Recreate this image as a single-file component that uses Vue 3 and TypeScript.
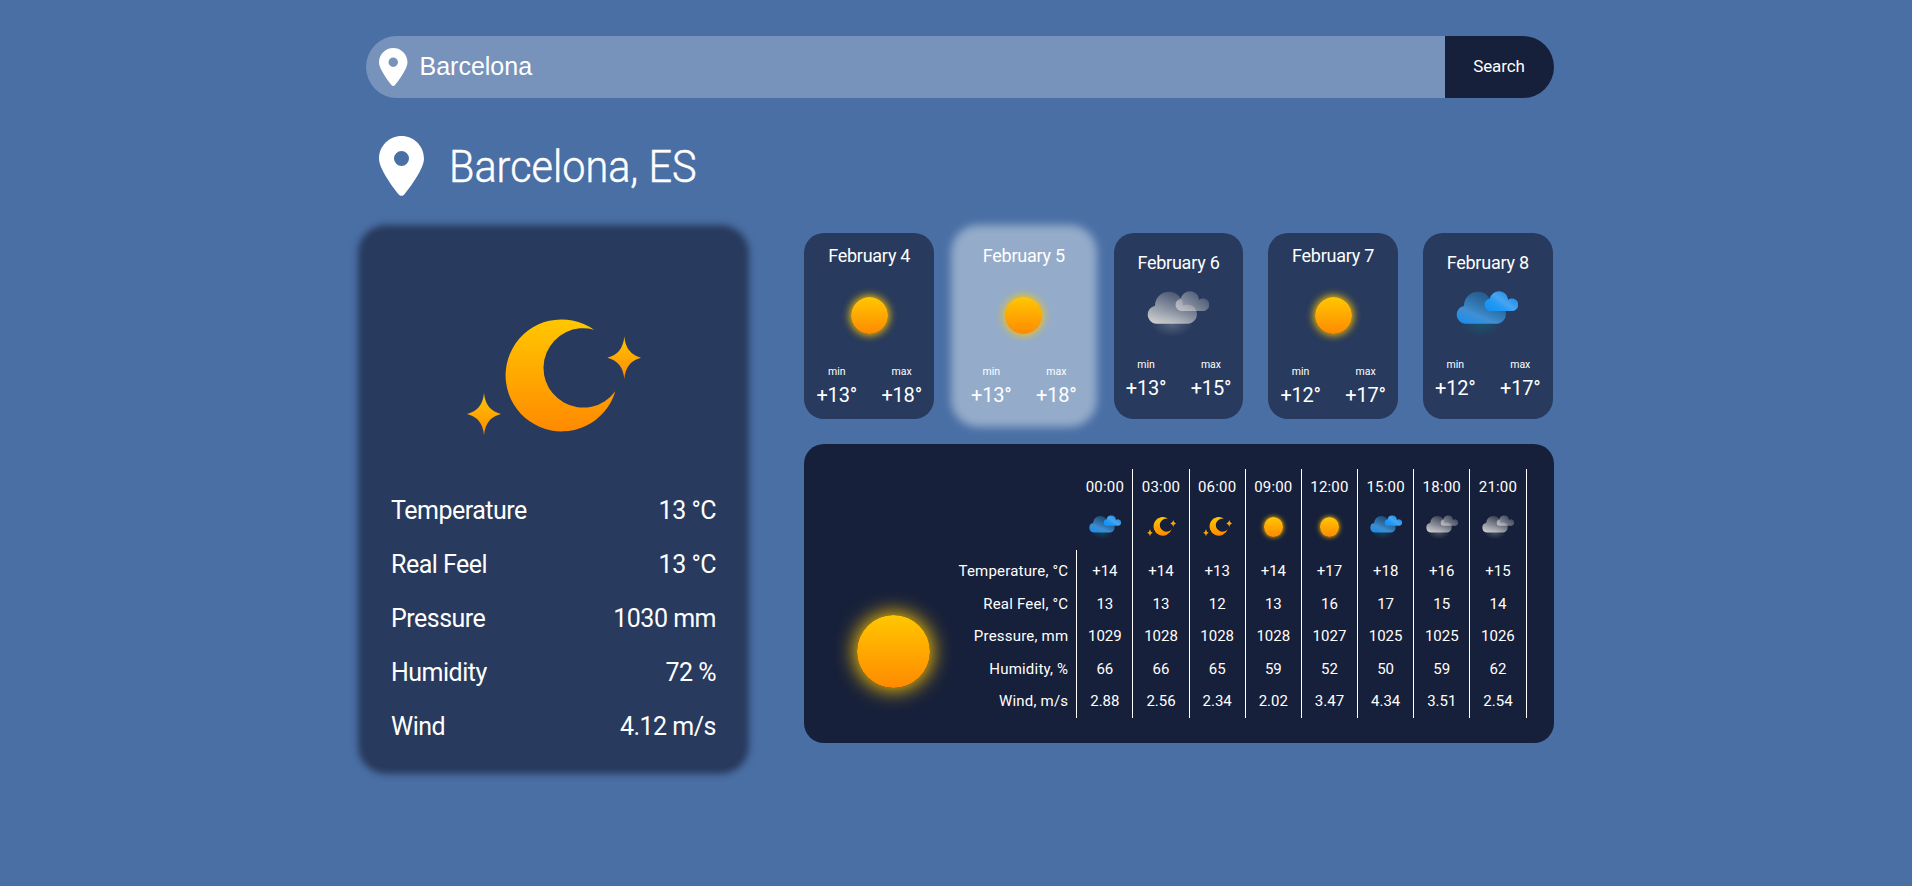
<script setup lang="ts">
import { ref } from 'vue'

type Icon = 'sun' | 'moon' | 'rain' | 'cloud'

interface Day {
  date: string
  icon: Icon
  min: string
  max: string
}

interface Hour {
  time: string
  icon: Icon
  values: string[]
}

const query = ref('Barcelona')
const activeDay = ref(1)

const current = [
  { label: 'Temperature', value: '13 °C' },
  { label: 'Real Feel', value: '13 °C' },
  { label: 'Pressure', value: '1030 mm' },
  { label: 'Humidity', value: '72 %' },
  { label: 'Wind', value: '4.12 m/s' },
]

const days: Day[] = [
  { date: 'February 4', icon: 'sun', min: '+13°', max: '+18°' },
  { date: 'February 5', icon: 'sun', min: '+13°', max: '+18°' },
  { date: 'February 6', icon: 'cloud', min: '+13°', max: '+15°' },
  { date: 'February 7', icon: 'sun', min: '+12°', max: '+17°' },
  { date: 'February 8', icon: 'rain', min: '+12°', max: '+17°' },
]

const labels = ['Temperature, °C', 'Real Feel, °C', 'Pressure, mm', 'Humidity, %', 'Wind, m/s']

const hours: Hour[] = [
  { time: '00:00', icon: 'rain', values: ['+14', '13', '1029', '66', '2.88'] },
  { time: '03:00', icon: 'moon', values: ['+14', '13', '1028', '66', '2.56'] },
  { time: '06:00', icon: 'moon', values: ['+13', '12', '1028', '65', '2.34'] },
  { time: '09:00', icon: 'sun', values: ['+14', '13', '1028', '59', '2.02'] },
  { time: '12:00', icon: 'sun', values: ['+17', '16', '1027', '52', '3.47'] },
  { time: '15:00', icon: 'rain', values: ['+18', '17', '1025', '50', '4.34'] },
  { time: '18:00', icon: 'cloud', values: ['+16', '15', '1025', '59', '3.51'] },
  { time: '21:00', icon: 'cloud', values: ['+15', '14', '1026', '62', '2.54'] },
]

const pin =
  'M215.7 499.2C267 435 384 279.4 384 192C384 86 298 0 192 0S0 86 0 192c0 87.4 117 243 168.3 307.2c12.3 15.3 35.1 15.3 47.4 0zM192 128a64 64 0 1 1 0 128 64 64 0 1 1 0-128z'
const bigCloud =
  'M9.1 33.7A9.1 9.1 0 0 1 8 15.7A14 14 0 0 1 36 15.8A9.5 9.5 0 1 1 40.5 33.7Z'
const smallCloud =
  'M34.2 21A6.2 6.2 0 0 1 33.8 8.7A9.3 9.3 0 0 1 52.2 9.7A6.3 6.3 0 1 1 55.7 21Z'
</script>

<template>
  <svg class="defs" width="0" height="0" aria-hidden="true">
    <defs>
      <linearGradient id="gold" x1="0" y1="0" x2="0" y2="1">
        <stop offset="0" stop-color="#ffc700" />
        <stop offset="1" stop-color="#ff8a00" />
      </linearGradient>
      <linearGradient id="gray-big" gradientUnits="userSpaceOnUse" x1="12" y1="38" x2="27" y2="0">
        <stop offset="0" stop-color="#d6d6d6" />
        <stop offset="1" stop-color="#d6d6d6" stop-opacity="0.15" />
      </linearGradient>
      <linearGradient id="gray-small" gradientUnits="userSpaceOnUse" x1="32" y1="22" x2="48" y2="1">
        <stop offset="0" stop-color="#d6d6d6" stop-opacity="0.75" />
        <stop offset="1" stop-color="#d6d6d6" stop-opacity="0.24" />
      </linearGradient>
      <linearGradient id="blue-big" gradientUnits="userSpaceOnUse" x1="10" y1="36" x2="25" y2="2">
        <stop offset="0" stop-color="#168cf0" />
        <stop offset="0.38" stop-color="#4298e0" stop-opacity="0.9" />
        <stop offset="1" stop-color="#2480bc" stop-opacity="0.48" />
      </linearGradient>
      <linearGradient id="blue-small" gradientUnits="userSpaceOnUse" x1="33" y1="18" x2="46" y2="0">
        <stop offset="0" stop-color="#1693f5" />
        <stop offset="0.35" stop-color="#239bf6" />
        <stop offset="0.62" stop-color="#4aa4f0" />
        <stop offset="1" stop-color="#2592ea" />
      </linearGradient>
      <linearGradient id="gray-glow" x1="0" y1="0" x2="0" y2="1">
        <stop offset="0" stop-color="#d6d6d6" />
        <stop offset="1" stop-color="#d6d6d6" />
      </linearGradient>
      <radialGradient id="gray-halo">
        <stop offset="0" stop-color="#d6d6d6" stop-opacity="0.27" />
        <stop offset="0.5" stop-color="#d6d6d6" stop-opacity="0.12" />
        <stop offset="1" stop-color="#d6d6d6" stop-opacity="0" />
      </radialGradient>
      <radialGradient id="blue-halo">
        <stop offset="0" stop-color="#007c8c" stop-opacity="0.38" />
        <stop offset="0.5" stop-color="#007c8c" stop-opacity="0.18" />
        <stop offset="1" stop-color="#007c8c" stop-opacity="0" />
      </radialGradient>
      <symbol id="moon" viewBox="0 -1 175 118">
        <path
          fill="url(#gold)"
          d="M128 9.7A56 56 0 1 0 149.3 71.3A39.7 39.7 0 1 1 128 9.7Z"
        />
        <path fill="url(#gold)" d="M158.3 16.5Q159.8 34 175.3 37.7Q159.8 41.4 158.3 59Q156.8 41.4 141.3 37.7Q156.8 34 158.3 16.5Z" />
        <path fill="url(#gold)" d="M18 73Q19.5 90.3 35 94Q19.5 97.7 18 115.3Q16.5 97.7 1 94Q16.5 90.3 18 73Z" />
      </symbol>
      <symbol id="cloud" viewBox="0 0 62 48">
        <ellipse cx="25" cy="34" rx="21" ry="13" fill="url(#gray-halo)" />
        <path :d="bigCloud" fill="url(#gray-big)" />
        <path :d="smallCloud" fill="url(#gray-small)" />
      </symbol>
      <symbol id="rain" viewBox="0 0 62 48">
        <ellipse cx="25" cy="34" rx="21" ry="13" fill="url(#blue-halo)" />
        <path :d="bigCloud" fill="url(#blue-big)" />
        <path :d="smallCloud" fill="url(#blue-small)" />
      </symbol>
    </defs>
  </svg>

  <main class="page">
    <form class="search" @submit.prevent>
      <label class="field">
        <svg class="pin-small" viewBox="0 0 384 512"><path :d="pin" /></svg>
        <input v-model="query" class="input" type="text" />
      </label>
      <button class="submit" type="submit">Search</button>
    </form>

    <header class="place">
      <svg class="pin-large" viewBox="0 0 384 512"><path :d="pin" /></svg>
      <h1 class="city">Barcelona, ES</h1>
    </header>

    <div class="content">
      <section class="today">
        <svg class="today-icon"><use href="#moon" /></svg>
        <dl class="stats">
          <div v-for="row in current" :key="row.label" class="stat">
            <dt>{{ row.label }}</dt>
            <dd>{{ row.value }}</dd>
          </div>
        </dl>
      </section>

      <div class="forecast">
        <ul class="days">
          <li
            v-for="(day, i) in days"
            :key="day.date"
            class="day"
            :class="{ active: i === activeDay }"
            @click="activeDay = i"
          >
            <span class="date">{{ day.date }}</span>
            <span v-if="day.icon === 'sun'" class="slot-sun"><i class="sun sun-day"></i></span>
            <span v-else class="slot-cloud">
              <svg class="cloud-day"><use :href="'#' + day.icon" /></svg>
            </span>
            <span class="range">
              <span class="bound"><small>min</small>{{ day.min }}</span>
              <span class="bound"><small>max</small>{{ day.max }}</span>
            </span>
          </li>
        </ul>

        <section class="hourly">
          <div class="summary"><i class="sun sun-large"></i></div>
          <div class="labels">
            <span v-for="label in labels" :key="label" class="cell">{{ label }}</span>
          </div>
          <div v-for="hour in hours" :key="hour.time" class="hour">
            <span class="time">{{ hour.time }}</span>
            <span class="hour-icon">
              <i v-if="hour.icon === 'sun'" class="sun sun-hour"></i>
              <svg v-else-if="hour.icon === 'moon'" class="moon-hour"><use href="#moon" /></svg>
              <svg v-else class="cloud-hour"><use :href="'#' + hour.icon" /></svg>
            </span>
            <span v-for="(value, v) in hour.values" :key="v" class="cell">{{ value }}</span>
          </div>
        </section>
      </div>
    </div>
  </main>
</template>

<style>
body {
  background: #4a6fa5;
}
</style>

<style scoped>
.defs {
  position: absolute;
}

.page {
  box-sizing: border-box;
  width: 100%;
  min-height: 886px;
  padding: 36px 358px 0 366px;
  color: #fff;
  font-family: Roboto, 'Liberation Sans', sans-serif;
}

.search {
  display: flex;
  height: 62px;
  border-radius: 31px;
  overflow: hidden;
}

.field {
  flex: 1;
  display: flex;
  align-items: center;
  background: rgba(255, 255, 255, 0.25);
}

.pin-small,
.pin-large {
  flex: none;
  fill: #fff;
}

.pin-small {
  width: 28.5px;
  height: 38px;
  margin-left: 13px;
}

.input {
  flex: 1;
  margin: 0;
  padding: 0 0 1px 12px;
  border: 0;
  outline: 0;
  background: none;
  color: #fff;
  font: 25px 'Liberation Sans', Arial, sans-serif;
}

.submit {
  width: 109px;
  padding: 0 1px 2px 0;
  border: 0;
  background: #17203a;
  color: #fff;
  font: 17px Roboto, sans-serif;
  letter-spacing: -0.1px;
}

.place {
  display: flex;
  align-items: center;
  height: 60px;
  margin-top: 38px;
  padding-left: 13px;
}

.pin-large {
  width: 45px;
  height: 60px;
}

.city {
  margin: 0 0 0 25px;
  font-size: 45px;
  font-weight: 300;
  line-height: 61px;
  transform: scaleX(0.92);
  transform-origin: left;
  -webkit-text-stroke: 0.5px #fff;
}

.content {
  display: flex;
  justify-content: space-between;
  align-items: flex-start;
  margin-top: 37px;
}

.today {
  box-sizing: border-box;
  width: 375px;
  height: 533px;
  padding: 86px 25px 0;
  border-radius: 20px;
  background: #283a5d;
  box-shadow: 0 0 7px 8px #283a5d;
}

.today-icon {
  display: block;
  width: 175px;
  height: 118px;
  margin: 0 auto;
}

.stats {
  margin: 47px 0 0;
  font-size: 25px;
  letter-spacing: -0.5px;
}

.stat {
  display: flex;
  justify-content: space-between;
  line-height: 54px;
}

.stat dd {
  margin: 0;
}

.forecast {
  width: 750px;
}

.days {
  display: flex;
  gap: 24.75px;
  margin: 0 0 0 0.25px;
  padding: 0;
  list-style: none;
}

.day {
  box-sizing: border-box;
  display: flex;
  flex: none;
  flex-direction: column;
  justify-content: center;
  width: 129.9px;
  height: 186px;
  padding-top: 3px;
  border-radius: 20px;
  background: #283a5d;
  text-align: center;
}

.day.active {
  background: #94acca;
  box-shadow: 0 0 8px 7.5px #94acca;
}

.date {
  font-size: 18px;
  line-height: 22px;
  letter-spacing: -0.25px;
}

.slot-sun {
  display: flex;
  align-items: center;
  justify-content: center;
  height: 98px;
}

.slot-cloud {
  height: 84px;
}

.cloud-day {
  display: block;
  width: 62px;
  height: 48px;
  margin: 16.5px 0 0 33.5px;
}

.sun {
  display: block;
  flex: none;
  border-radius: 50%;
  background: linear-gradient(#ffc700, #ff8a00);
}

.sun-day {
  width: 37px;
  height: 37px;
  box-shadow: 0 0 9px 1px #ffc700;
}

.sun-large {
  width: 73px;
  height: 73px;
  box-shadow: 0 0 20px 2px #ffc700;
}

.sun-hour {
  width: 19.5px;
  height: 19.5px;
  margin-top: 2px;
  box-shadow: 0 0 5px #ffc700;
}

.range {
  display: flex;
}

.bound {
  flex: 1;
  font-size: 20px;
  line-height: 32px;
  letter-spacing: -0.2px;
}

.bound small {
  display: block;
  font-size: 10.5px;
  line-height: 14px;
  letter-spacing: 0;
}

.hourly {
  box-sizing: border-box;
  display: flex;
  height: 299px;
  margin-top: 25px;
  padding: 25px 0;
  border-radius: 20px;
  background: #17203a;
  font-size: 15px;
}

.summary {
  box-sizing: border-box;
  flex: none;
  width: 126px;
  padding: 146px 0 0 53px;
}

.labels {
  box-sizing: border-box;
  flex: none;
  width: 147.28px;
  margin-top: 81px;
  padding: 5px 8px 0 0;
  border-right: 1px solid #fff;
  text-align: right;
  letter-spacing: 0.2px;
}

.cell {
  display: block;
  height: 32.5px;
  line-height: 32.5px;
  white-space: nowrap;
}

.hour {
  box-sizing: border-box;
  flex: none;
  width: 56.16px;
  border-right: 1px solid #fff;
  text-align: center;
}

.time {
  display: block;
  line-height: 36px;
  letter-spacing: 0.2px;
}

.hour-icon {
  display: flex;
  justify-content: center;
  align-items: flex-start;
  box-sizing: border-box;
  height: 50px;
  padding-top: 10px;
}

.moon-hour {
  width: 29px;
  height: 19.6px;
  margin-top: 2px;
}

.cloud-hour {
  width: 32px;
  height: 24.8px;
}
</style>
